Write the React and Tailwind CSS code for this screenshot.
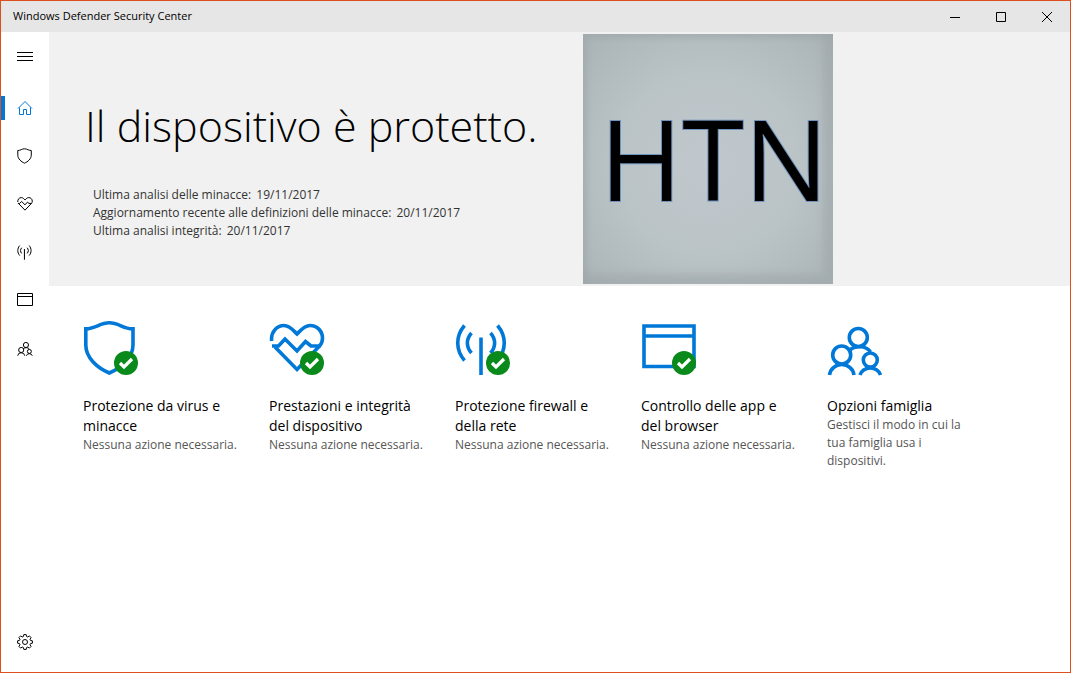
import { useState } from 'react';

function ShieldShape() {
  return <path d="M2.8 8.8C12 9 17 2.8 26.3 2.8S40.5 9 50 8.8V25C50 38 38 48 26.3 53C14.5 48 2.8 38 2.8 25Z" />;
}

function HeartShape() {
  return (
    <>
      <path d="M2.7 21C1.5 12 8 5.5 15 5.5C20.5 5.5 24 10 28 14C32 10 35.5 5.5 41 5.5C48 5.5 53.5 11 53.5 18C53.5 21 52.5 24 50.5 26H42L36.5 21.5L28 31L16 19L9.5 26H3" />
      <path d="M6 27L28 49.5L50.5 26" />
    </>
  );
}

function AntennaShape() {
  return (
    <>
      <path d="M26 17.5V55" />
      <path d="M16.5 13C11 19 11 27 16.5 33M9.5 5.5C0.5 16 0.5 30 9.5 40.5" />
      <path d="M35.5 13C41 19 41 27 35.5 33M42.5 5.5C51.5 16 51.5 30 42.5 40.5" />
    </>
  );
}

function FamilyShape() {
  return (
    <>
      <circle cx="31.3" cy="17.5" r="9" />
      <circle cx="14.7" cy="35" r="9" />
      <circle cx="43.3" cy="40" r="7" />
      <path d="M2.5 55A12.3 11.5 0 0 1 27 55M33 55A10.5 9 0 0 1 53.5 55" />
      <path d="M22 30.5C28 25.5 39 25 43.5 32" />
    </>
  );
}

function WindowShape() {
  return <path d="M3 6H53V46.5H3ZM3 16H53" />;
}

function Icon({ shape: Shape, small }) {
  return (
    <svg
      viewBox="0 0 56 56"
      className={small ? 'size-4' : 'size-14'}
      fill="none"
      stroke="currentColor"
      strokeWidth={small ? 3.5 : 3.6}
      aria-hidden="true"
    >
      <Shape />
    </svg>
  );
}

function SmallWindowIcon() {
  return (
    <svg viewBox="0 0 16 16" className="size-4" fill="none" stroke="currentColor" aria-hidden="true">
      <path d="M0.5 1.5H15.5V13.5H0.5ZM0.5 4.5H15.5" />
    </svg>
  );
}

function HomeIcon() {
  return (
    <svg viewBox="0 0 16 16" className="size-4" fill="none" stroke="currentColor" aria-hidden="true">
      <path d="M1 8.5L8 1.5L15 8.5M2.5 7.5V14.5H6.5V9.5H9.5V14.5H13.5V7.5" />
    </svg>
  );
}

function MenuIcon() {
  return (
    <svg viewBox="0 0 16 16" className="size-4" fill="none" stroke="currentColor" aria-hidden="true">
      <path d="M0 4.5H16M0 8.5H16M0 12.5H16" />
    </svg>
  );
}

function GearIcon() {
  return (
    <svg viewBox="0 0 16 16" className="size-4" fill="none" stroke="currentColor" aria-hidden="true">
      <circle cx="8" cy="8" r="2.5" />
      <path d="M6.8 0.6H9.2L9.6 2.5L10.8 3L12.4 1.9L14.1 3.6L13 5.2L13.5 6.4L15.4 6.8V9.2L13.5 9.6L13 10.8L14.1 12.4L12.4 14.1L10.8 13L9.6 13.5L9.2 15.4H6.8L6.4 13.5L5.2 13L3.6 14.1L1.9 12.4L3 10.8L2.5 9.6L0.6 9.2V6.8L2.5 6.4L3 5.2L1.9 3.6L3.6 1.9L5.2 3L6.4 2.5Z" />
    </svg>
  );
}

function OkBadge() {
  return (
    <svg viewBox="0 0 24 24" className="absolute left-[31px] top-[31px] size-6" aria-hidden="true">
      <circle cx="12" cy="12" r="12" fill="#0b8a1c" />
      <path d="M6 12L10 16L18 8" fill="none" stroke="#fff" strokeWidth="3.2" />
    </svg>
  );
}

const NAV_ITEMS = [
  { id: 'home', label: 'Home', icon: <HomeIcon /> },
  { id: 'virus', label: 'Protezione da virus e minacce', icon: <Icon shape={ShieldShape} small /> },
  { id: 'health', label: 'Prestazioni e integrità del dispositivo', icon: <Icon shape={HeartShape} small /> },
  { id: 'firewall', label: 'Protezione firewall e della rete', icon: <Icon shape={AntennaShape} small /> },
  { id: 'apps', label: 'Controllo delle app e del browser', icon: <SmallWindowIcon /> },
  { id: 'family', label: 'Opzioni famiglia', icon: <Icon shape={FamilyShape} small /> },
];

const SCANS = [
  { label: 'Ultima analisi delle minacce:', date: '19/11/2017' },
  { label: 'Aggiornamento recente alle definizioni delle minacce:', date: '20/11/2017' },
  { label: 'Ultima analisi integrità:', date: '20/11/2017' },
];

const CARDS = [
  { title: 'Protezione da virus e minacce', text: 'Nessuna azione necessaria.', shape: ShieldShape, ok: true },
  { title: 'Prestazioni e integrità del dispositivo', text: 'Nessuna azione necessaria.', shape: HeartShape, ok: true },
  { title: 'Protezione firewall e della rete', text: 'Nessuna azione necessaria.', shape: AntennaShape, ok: true },
  { title: 'Controllo delle app e del browser', text: 'Nessuna azione necessaria.', shape: WindowShape, ok: true },
  { title: 'Opzioni famiglia', text: 'Gestisci il modo in cui la tua famiglia usa i dispositivi.', shape: FamilyShape, ok: false },
];

function TitleBar() {
  return (
    <header className="flex h-[31px] items-center bg-[#e6e6e6]">
      <h2 className="flex-1 pl-3 text-[11px]">Windows Defender Security Center</h2>
      <button aria-label="Riduci a icona" className="flex h-full w-[46px] items-center justify-center">
        <svg viewBox="0 0 10 10" className="size-[10px]" stroke="currentColor"><path d="M0 5.5H10" /></svg>
      </button>
      <button aria-label="Ingrandisci" className="flex h-full w-[46px] items-center justify-center">
        <svg viewBox="0 0 10 10" className="size-[10px]" fill="none" stroke="currentColor"><path d="M0.5 0.5H9.5V9.5H0.5Z" /></svg>
      </button>
      <button aria-label="Chiudi" className="flex h-full w-[46px] items-center justify-center">
        <svg viewBox="0 0 10 10" className="size-[10px]" stroke="currentColor"><path d="M0 0L10 10M10 0L0 10" /></svg>
      </button>
    </header>
  );
}

function Sidebar() {
  const [active, setActive] = useState('home');

  return (
    <nav className="flex w-12 shrink-0 flex-col pb-[6px]">
      <button aria-label="Menu" className="mb-1 flex h-12 items-center justify-center">
        <MenuIcon />
      </button>
      {NAV_ITEMS.map((item) => (
        <button
          key={item.id}
          aria-label={item.label}
          onClick={() => setActive(item.id)}
          className={`relative flex h-12 items-center justify-center ${active === item.id ? 'text-[#0078d7]' : ''}`}
        >
          {active === item.id && <span className="absolute left-0 top-3 h-6 w-1 bg-[#0078d7]" />}
          {item.icon}
        </button>
      ))}
      <button aria-label="Impostazioni" className="mt-auto flex h-12 items-center justify-center">
        <GearIcon />
      </button>
    </nav>
  );
}

function Hero() {
  return (
    <section className="flex bg-[#f1f1f1] py-[2px] pl-9">
      <div className="w-[498px] shrink-0 pt-[60px]">
        <h1 className="whitespace-nowrap text-[43px] leading-[64px] font-light">Il dispositivo è protetto.</h1>
        <div className="mt-7 pl-2 text-xs leading-[18px] text-[#333]">
          {SCANS.map((scan) => (
            <p key={scan.label}>
              {scan.label} <span className="ml-[2px]">{scan.date}</span>
            </p>
          ))}
        </div>
      </div>
      <div className="flex size-[250px] shrink-0 items-center justify-center bg-[radial-gradient(circle_at_50%_52%,#c0c8cd_0%,#bac3c6_50%,#a9b2b4_100%)] shadow-[inset_-10px_-10px_6px_0px_#9ea7aa90,inset_4px_4px_5px_#9ea7aaa0]">
        <span className="pb-[2px] pl-3 text-[112px] leading-none [-webkit-text-stroke:2px_#6f93bd] [paint-order:stroke_fill]">HTN</span>
      </div>
    </section>
  );
}

function Card({ title, text, shape, ok }) {
  return (
    <li className="w-[186px] pr-[30px]">
      <div className="relative size-14 text-[#0078d7]">
        <Icon shape={shape} />
        {ok && <OkBadge />}
      </div>
      <h3 className="mt-5 text-sm leading-5">{title}</h3>
      <p className={`text-xs leading-[18px] text-[#555] ${ok ? '' : 'pr-3'}`}>{text}</p>
    </li>
  );
}

export default function App() {
  return (
    <div className="flex min-h-screen flex-col border border-[#dd4f1c] bg-white font-['Open_Sans','Noto_Sans',sans-serif] text-black">
      <TitleBar />
      <div className="flex flex-1">
        <Sidebar />
        <main className="min-w-0 flex-1">
          <Hero />
          <ul className="flex flex-wrap gap-y-8 pl-[34px] pt-[34px]">
            {CARDS.map((card) => (
              <Card key={card.title} {...card} />
            ))}
          </ul>
        </main>
      </div>
    </div>
  );
}
